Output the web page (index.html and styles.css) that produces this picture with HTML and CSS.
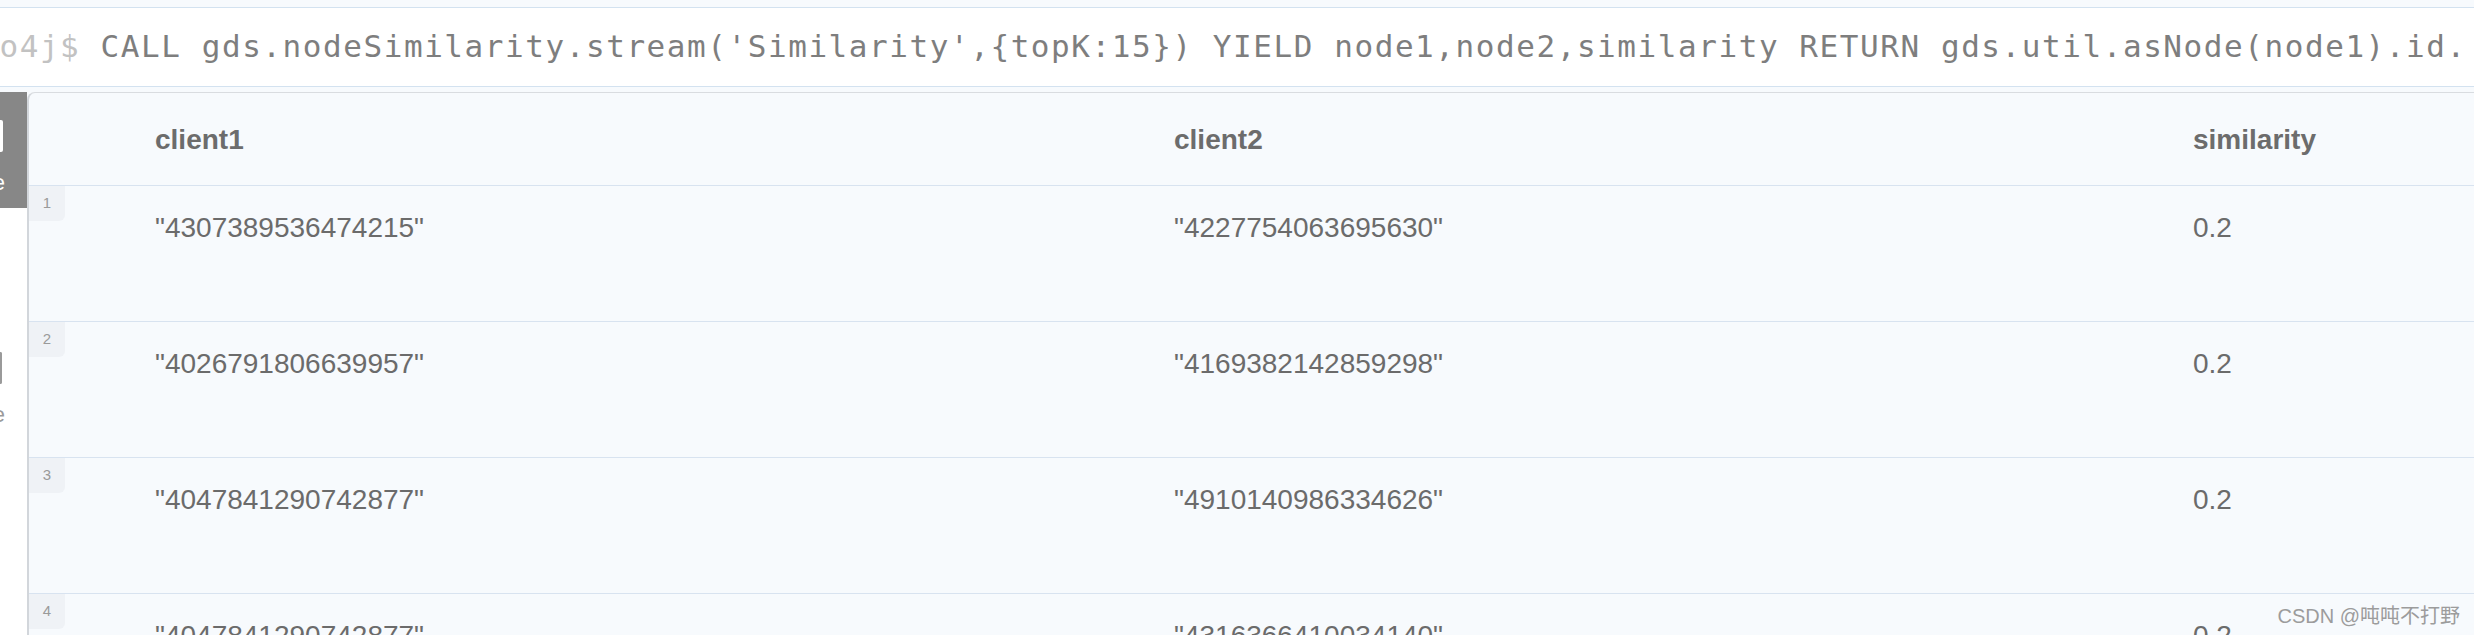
FILE: index.html
```html
<!DOCTYPE html>
<html lang="en">
<head>
<meta charset="utf-8">
<title>neo4j result</title>
<link rel="stylesheet" href="styles.css">
</head>
<body>
<div class="page">
  <div class="editor">
    <div class="cmd"><span class="prompt">neo4j$</span> CALL gds.nodeSimilarity.stream('Similarity',{topK:15}) YIELD node1,node2,similarity RETURN gds.util.asNode(node1).id.</div>
  </div>
  <div class="main">
    <div class="sidebar">
      <div class="sb-btn active">
        <div class="sb-icon"></div>
        <div class="sb-label"><span>Table</span></div>
      </div>
      <div class="sb-btn">
        <div class="sb-icon outline"></div>
        <div class="sb-label"><span>Code</span></div>
      </div>
    </div>
    <div class="card">
      <div class="row head">
        <div class="cell">client1</div>
        <div class="cell">client2</div>
        <div class="cell">similarity</div>
      </div>
      <div class="row">
        <span class="num">1</span>
        <div class="cell">"4307389536474215"</div>
        <div class="cell">"4227754063695630"</div>
        <div class="cell">0.2</div>
      </div>
      <div class="row">
        <span class="num">2</span>
        <div class="cell">"4026791806639957"</div>
        <div class="cell">"4169382142859298"</div>
        <div class="cell">0.2</div>
      </div>
      <div class="row">
        <span class="num">3</span>
        <div class="cell">"4047841290742877"</div>
        <div class="cell">"4910140986334626"</div>
        <div class="cell">0.2</div>
      </div>
      <div class="row">
        <span class="num">4</span>
        <div class="cell">"4047841290742877"</div>
        <div class="cell">"4316366410034140"</div>
        <div class="cell">0.2</div>
      </div>
    </div>
  </div>
  <div class="watermark">CSDN @吨吨不打野</div>
</div>
</body>
</html>
```
FILE: styles.css
```css
html, body {
  margin: 0;
  padding: 0;
}
body {
  background: #f7fafd;
  width: 2474px;
  height: 635px;
  overflow: hidden;
}
.page {
  position: relative;
  width: 2474px;
  height: 635px;
  overflow: hidden;
  padding-top: 7px;
  box-sizing: border-box;
}
.editor {
  background: #ffffff;
  border-top: 1px solid #d3e2f0;
  border-bottom: 1px solid #d3e2f0;
  height: 78px;
  overflow: hidden;
}
.cmd {
  font-family: "DejaVu Sans Mono", "Liberation Mono", monospace;
  font-size: 31px;
  letter-spacing: 1.56px;
  line-height: 76px;
  color: #7e7e7e;
  white-space: nowrap;
  margin-left: -41px;
}
.prompt {
  color: #c2c2c2;
}
.main {
  display: flex;
  margin-top: 5px;
  height: 600px;
}
.sidebar {
  width: 27px;
  flex: none;
  background: #ffffff;
  overflow: hidden;
  display: flex;
  flex-direction: column;
}
.sb-btn {
  height: 116px;
  display: flex;
  flex-direction: column;
  padding-top: 28px;
  box-sizing: border-box;
  gap: 20px;
}
.sb-btn.active {
  background: #878787;
}
.sb-btn + .sb-btn {
  margin-top: 114px;
  padding-top: 30px;
}
.sb-icon {
  width: 3px;
  height: 32px;
  background: #ffffff;
  border-radius: 0 2px 2px 0;
}
.sb-icon.outline {
  background: transparent;
  width: 2px;
  border-right: 2px solid #9a9a9a;
  border-top: 2px solid #9a9a9a;
  border-bottom: 2px solid #9a9a9a;
  box-sizing: border-box;
}
.sb-label {
  width: 5px;
  overflow: hidden;
  display: flex;
  justify-content: flex-end;
  white-space: nowrap;
  font-family: "Liberation Sans", Arial, sans-serif;
  font-size: 22px;
  line-height: 22px;
  color: #ffffff;
}
.sb-btn:not(.active) .sb-label {
  color: #9a9a9a;
}
.card {
  flex: 1;
  background: #f7fafd;
  border-left: 2px solid #d2d6db;
  border-top: 1px solid #d9dce0;
  border-top-left-radius: 8px;
  overflow: hidden;
}
.row {
  position: relative;
  display: grid;
  grid-template-columns: repeat(3, 1019px);
  height: 136px;
  border-bottom: 1px solid #d8e3f0;
  box-sizing: border-box;
  font-family: "Liberation Sans", Arial, sans-serif;
  font-size: 28px;
  line-height: 32px;
  color: #6b6b6b;
}
.row .cell {
  padding-left: 126px;
  padding-top: 26px;
  white-space: nowrap;
}
.row.head {
  height: 93px;
  font-weight: bold;
  color: #6c6c6c;
  align-items: center;
}
.row.head .cell {
  padding-top: 2px;
}
.num {
  position: absolute;
  left: 0;
  top: 0;
  width: 36px;
  height: 35px;
  background: #eff2f6;
  border-bottom-right-radius: 6px;
  font-size: 15px;
  line-height: 33px;
  text-align: center;
  color: #9a9a9a;
}
.watermark {
  position: absolute;
  right: 14px;
  top: 602px;
  font-family: "Liberation Sans", "Noto Sans CJK SC", sans-serif;
  font-size: 20px;
  line-height: 28px;
  color: #9c9c9c;
  white-space: nowrap;
}
```
